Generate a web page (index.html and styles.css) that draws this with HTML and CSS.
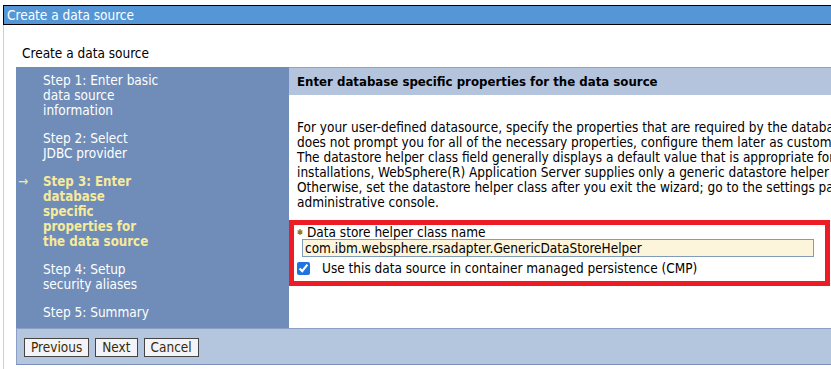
FILE: index.html
```html
<!DOCTYPE html>
<html>
<head>
<meta charset="utf-8">
<link rel="stylesheet" href="styles.css">
</head>
<body>
<div class="titlebar">Create a data source</div>
<div class="frame">
  <div class="pagetitle">Create a data source</div>
  <div class="wizard">
    <div class="steps">
      <div class="step">Step 1: Enter basic<br>data source<br>information</div>
      <div class="step">Step 2: Select<br>JDBC provider</div>
      <div class="step current"><span class="arrow">→</span>Step 3: Enter<br>database<br>specific<br>properties for<br>the data source</div>
      <div class="step">Step 4: Setup<br>security aliases</div>
      <div class="step">Step 5: Summary</div>
    </div>
    <div class="content">
      <div class="content-head">Enter database specific properties for the data source</div>
      <p class="desc">For your user-defined datasource, specify the properties that are required by the database. If the wizard<br>does not prompt you for all of the necessary properties, configure them later as custom properties.<br>The datastore helper class field generally displays a default value that is appropriate for most<br>installations, WebSphere(R) Application Server supplies only a generic datastore helper class.<br>Otherwise, set the datastore helper class after you exit the wizard; go to the settings page in the<br>administrative console.</p>
      <div class="highlight">
        <div class="field-label"><svg class="req" width="6" height="8" viewBox="0 0 6 8"><path d="M3 1v6M0.6 2.6l4.8 2.8M5.4 2.6l-4.8 2.8" stroke="#8a7a2a" stroke-width="1.3" fill="none"/></svg>Data store helper class name</div>
        <input class="field-input" type="text" value="com.ibm.websphere.rsadapter.GenericDataStoreHelper">
        <label class="check-row"><input type="checkbox" checked><span>Use this data source in container managed persistence (CMP)</span></label>
      </div>
    </div>
  </div>
  <div class="buttonbar">
    <button class="btn" type="button">Previous</button>
    <button class="btn" type="button">Next</button>
    <button class="btn" type="button">Cancel</button>
  </div>
</div>
</body>
</html>
```
FILE: styles.css
```css
html, body {
  margin: 0;
  padding: 0;
  overflow: hidden;
  background: #fff;
}
body {
  font-family: "DejaVu Sans Condensed", "DejaVu Sans", sans-serif;
  font-stretch: condensed;
  font-size: 13.5px;
  line-height: 15px;
  color: #000;
  width: 831px;
  height: 369px;
}
.titlebar {
  margin: 5px 0 0 3px;
  height: 18px;
  line-height: 18px;
  border: 1px solid #000;
  border-right: none;
  background: #5597d6;
  color: #fff;
  padding-left: 3px;
  white-space: nowrap;
}
.frame {
  margin-left: 3px;
  border-left: 1px solid #cfcfcf;
  padding-left: 12px;
  height: 344px;
}
.pagetitle {
  padding: 21px 0 0 6px;
  height: 21px;
}
.wizard {
  display: grid;
  grid-template-columns: 273px 1000px;
  height: 261px;
}
.steps {
  background: #6f8db8;
  color: #fff;
  padding: 6px 0 0 27px;
  display: flex;
  flex-direction: column;
  gap: 13px;
  white-space: nowrap;
}
.step {
  position: relative;
}
.step.current {
  color: #f6ea9c;
  font-weight: bold;
  font-size: 13.2px;
}
.arrow {
  position: absolute;
  left: -25px;
  top: 0;
  font-weight: normal;
}
.content {
  white-space: nowrap;
}
.content-head {
  background: #b4c4dd;
  border-top: 1px solid #8fa3c6;
  height: 27px;
  line-height: 27px;
  font-weight: bold;
  font-size: 13.1px;
  padding-left: 8px;
}
.desc {
  margin: 25px 0 0 8px;
}
.highlight {
  margin-top: 10px;
  width: 541px;
  height: 66px;
  box-sizing: border-box;
  border: 5px solid #ed1c24;
  padding: 0 0 0 3px;
}
.field-label {
  display: flex;
  align-items: center;
  height: 14px;
}
.req {
  margin-right: 4px;
}
.field-input {
  display: block;
  margin: 0 0 0 5px;
  width: 512px;
  height: 18px;
  box-sizing: border-box;
  border: 1px solid #7f9db9;
  background: #fcf4db;
  font: inherit;
  padding: 0 2px;
  color: #000;
  outline: none;
}
.check-row {
  display: flex;
  align-items: center;
  margin-top: 5px;
  height: 13px;
}
.check-row input {
  margin: 0 12px 0 0;
  width: 13px;
  height: 13px;
  accent-color: #1f75e0;
}
.buttonbar {
  background: #b4c5de;
  border: 1px solid #8aa0c6;
  border-right: none;
  border-bottom-color: #7b90b8;
  height: 35px;
  display: flex;
  align-items: center;
  gap: 6px;
  padding-left: 7px;
}
.btn {
  font: inherit;
  color: #3b2a00;
  background: #f2f4f9;
  border: 1px solid #444;
  height: 19px;
  padding: 0 6px;
  line-height: 15px;
  margin: 0;
  margin-top: 2px;
}
```
